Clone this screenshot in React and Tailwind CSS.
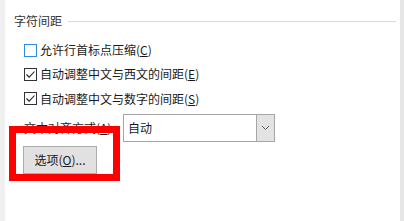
import React from "react";

const font = { fontFamily: '"Noto Sans CJK SC", "Noto Sans", sans-serif' };

// Small checkbox like the Windows dialog one
const Check = ({ checked, focused }) => (
  <span
    className={`w-[13px] h-[13px] border flex items-center justify-center bg-white ${
      focused ? "border-[#2e8ae6]" : "border-[#333333]"
    }`}
  >
    {checked && (
      <svg width="11" height="11" viewBox="0 0 11 11">
        <path d="M1.5 5.5 L4.2 8.2 L9.5 2.5" fill="none" stroke="#222" strokeWidth="1.1" />
      </svg>
    )}
  </span>
);

const CheckRow = ({ checked, focused, label, hotkey, className }) => (
  <div className={`flex items-center pl-[19px] ${className}`}>
    <Check checked={checked} focused={focused} />
    <span className="ml-[3px] text-[12px] leading-[16px] text-[#1a1a1a]">
      {label}(<span className="underline">{hotkey}</span>)
    </span>
  </div>
);

export default function App() {
  return (
    <div className="relative w-[404px] h-[221px] bg-white overflow-hidden flex" style={font}>
      {/* left dialog edge */}
      <div className="w-[5px] h-full bg-[#f0f0f0]" />

      <div className="flex-1 flex flex-col">
        {/* group header */}
        <div className="flex items-center mt-[13px] h-[16px] pl-[9px] pr-[4px]">
          <span className="text-[12px] leading-[16px] text-[#333333]">字符间距</span>
          <div className="flex-1 h-px bg-[#d9d9d9] ml-[6px]" />
        </div>

        <CheckRow className="mt-[9px] h-[24px]" focused label="允许行首标点压缩" hotkey="C" />
        <CheckRow className="h-[24px]" checked label="自动调整中文与西文的间距" hotkey="E" />
        <CheckRow className="h-[25px]" checked label="自动调整中文与数字的间距" hotkey="S" />

        {/* text alignment row */}
        <div className="flex items-center mt-[3px] h-[28px] pl-[19px]">
          <span className="w-[99px] text-[12px] leading-[16px] text-[#1a1a1a]">
            文本对齐方式(<span className="underline">A</span>)
          </span>
          <div className="flex w-[152px] h-[28px] border border-[#a6a6a6] bg-white">
            <span className="flex-1 pl-[4px] flex items-center text-[12px] text-[#1a1a1a]">自动</span>
            <span className="w-[18px] h-full bg-[#e3e3e3] border-l border-[#a6a6a6] flex items-center justify-center">
              <svg width="9" height="6" viewBox="0 0 9 6">
                <path d="M1 1 L4.5 4.5 L8 1" fill="none" stroke="#606060" strokeWidth="1" />
              </svg>
            </span>
          </div>
        </div>

        {/* options button */}
        <div className="mt-[4px] pl-[18px]">
          <button className="w-[74px] h-[28px] bg-[#e1e1e1] border border-[#adadad] text-[12px] text-[#1a1a1a] flex items-center justify-center">
            选项(<span className="underline">O</span>)...
          </button>
        </div>
      </div>

      {/* right dialog edge */}
      <div className="w-[4px] h-full bg-[#e6e6e6]" />

      {/* red highlight overlay */}
      <div className="absolute left-[9px] top-[126px] w-[111px] h-[55px] border-[7px] border-[#ff0000]" />
    </div>
  );
}
